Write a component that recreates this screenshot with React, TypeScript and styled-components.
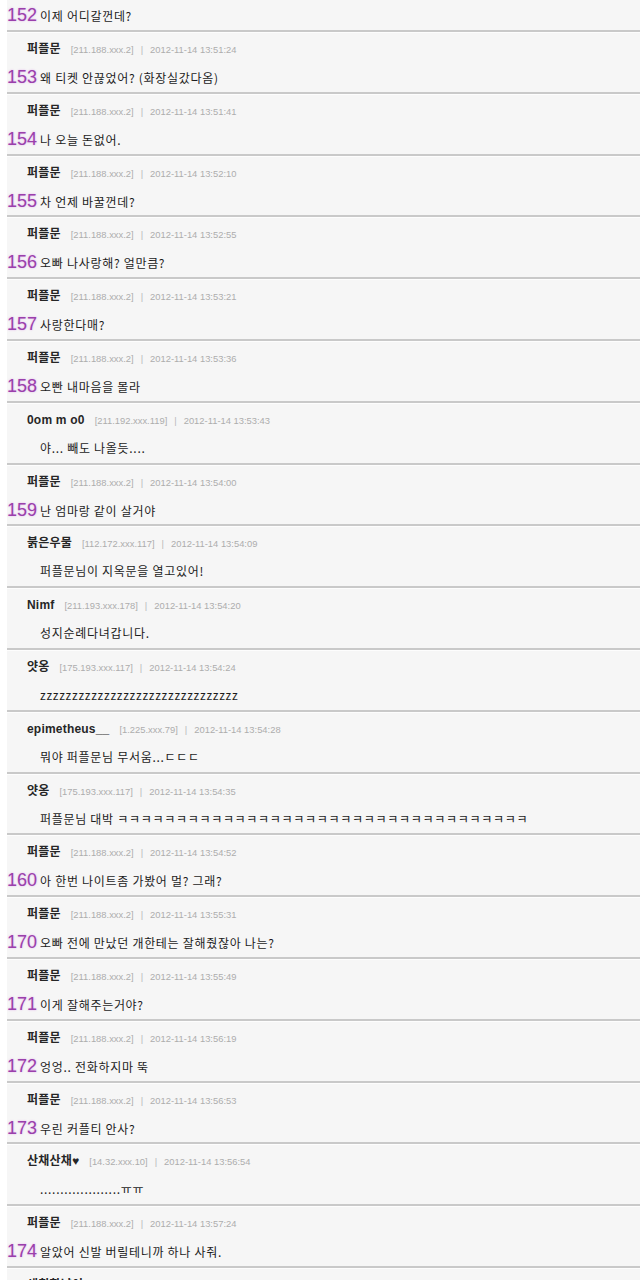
import styled, { createGlobalStyle } from "styled-components";

const GlobalStyle = createGlobalStyle`
  html, body {
    margin: 0;
    padding: 0;
    background: #ffffff;
    overflow: hidden;
  }
  body {
    font-family: "Noto Sans CJK KR", "Liberation Sans", sans-serif;
  }
`;

interface Comment {
  author: string;
  ip: string;
  time: string;
  no?: number;
  text: string;
}

const PURPLE_IP = "[211.188.xxx.2]";

const comments: Comment[] = [
  { author: "퍼플문", ip: PURPLE_IP, time: "2012-11-14 13:50:58", no: 152, text: "이제 어디갈껀데?" },
  { author: "퍼플문", ip: PURPLE_IP, time: "2012-11-14 13:51:24", no: 153, text: "왜 티켓 안끊었어? (화장실갔다옴)" },
  { author: "퍼플문", ip: PURPLE_IP, time: "2012-11-14 13:51:41", no: 154, text: "나 오늘 돈없어." },
  { author: "퍼플문", ip: PURPLE_IP, time: "2012-11-14 13:52:10", no: 155, text: "차 언제 바꿀껀데?" },
  { author: "퍼플문", ip: PURPLE_IP, time: "2012-11-14 13:52:55", no: 156, text: "오빠 나사랑해? 얼만큼?" },
  { author: "퍼플문", ip: PURPLE_IP, time: "2012-11-14 13:53:21", no: 157, text: "사랑한다매?" },
  { author: "퍼플문", ip: PURPLE_IP, time: "2012-11-14 13:53:36", no: 158, text: "오빤 내마음을 몰라" },
  { author: "0om m o0", ip: "[211.192.xxx.119]", time: "2012-11-14 13:53:43", text: "야... 빼도 나올듯...." },
  { author: "퍼플문", ip: PURPLE_IP, time: "2012-11-14 13:54:00", no: 159, text: "난 엄마랑 같이 살거야" },
  { author: "붉은우물", ip: "[112.172.xxx.117]", time: "2012-11-14 13:54:09", text: "퍼플문님이 지옥문을 열고있어!" },
  { author: "Nimf", ip: "[211.193.xxx.178]", time: "2012-11-14 13:54:20", text: "성지순례다녀갑니다." },
  { author: "얏옹", ip: "[175.193.xxx.117]", time: "2012-11-14 13:54:24", text: "z".repeat(31) },
  { author: "epimetheus__", ip: "[1.225.xxx.79]", time: "2012-11-14 13:54:28", text: "뭐야 퍼플문님 무서움...ㄷㄷㄷ" },
  { author: "얏옹", ip: "[175.193.xxx.117]", time: "2012-11-14 13:54:35", text: "퍼플문님 대박 " + "ㅋ".repeat(35) },
  { author: "퍼플문", ip: PURPLE_IP, time: "2012-11-14 13:54:52", no: 160, text: "아 한번 나이트좀 가봤어 멀? 그래?" },
  { author: "퍼플문", ip: PURPLE_IP, time: "2012-11-14 13:55:31", no: 170, text: "오빠 전에 만났던 개한테는 잘해줬잖아 나는?" },
  { author: "퍼플문", ip: PURPLE_IP, time: "2012-11-14 13:55:49", no: 171, text: "이게 잘해주는거야?" },
  { author: "퍼플문", ip: PURPLE_IP, time: "2012-11-14 13:56:19", no: 172, text: "엉엉.. 전화하지마 뚝" },
  { author: "퍼플문", ip: PURPLE_IP, time: "2012-11-14 13:56:53", no: 173, text: "우린 커플티 안사?" },
  { author: "산채산채♥", ip: "[14.32.xxx.10]", time: "2012-11-14 13:56:54", text: ".".repeat(20) + "ㅠㅠ" },
  { author: "퍼플문", ip: PURPLE_IP, time: "2012-11-14 13:57:24", no: 174, text: "알았어 신발 버릴테니까 하나 사줘." },
  { author: "새침한냥이", ip: "[121.131.xxx.52]", time: "2012-11-14 13:57:40", text: "ㅋㅋㅋㅋㅋ" },
];

const Board = styled.div`
  margin-left: 7px;
  margin-top: -31.8px;
  background: #f6f6f6;
`;

const Row = styled.div`
  box-sizing: border-box;
  height: 61.8px;
  border-top: 2px solid #c9c9c9;
  box-shadow: inset 0 1px 0 #fdfdfd;
  padding-top: 10px;
`;

const Meta = styled.div`
  display: flex;
  align-items: baseline;
  height: 14px;
  line-height: 14px;
  padding-left: 20px;
  white-space: nowrap;
`;

const Author = styled.span`
  font-family: "Liberation Sans", "Noto Sans CJK KR", sans-serif;
  font-weight: 700;
  font-size: 12px;
  color: #262626;
  letter-spacing: 0.2px;
`;

const Info = styled.span`
  font-family: "Liberation Sans", sans-serif;
  font-size: 9.4px;
  color: #adadad;
`;

const Ip = styled(Info)`
  margin-left: 10px;
`;

const Sep = styled(Info)`
  margin: 0 7px;
  color: #b8b8b8;
`;

const Body = styled.div<{ $numbered: boolean }>`
  display: flex;
  align-items: baseline;
  margin-top: 11px;
  height: 20px;
  line-height: 20px;
  padding-left: ${(p) => (p.$numbered ? 0 : 33)}px;
  white-space: nowrap;
`;

const Num = styled.span`
  font-family: "Liberation Sans", sans-serif;
  font-size: 18px;
  color: #9a40ab;
  text-shadow: 0 0 2px rgba(220, 160, 232, 0.85);
  margin-right: 3px;
`;

const Text = styled.span`
  font-family: "Noto Sans CJK KR", "Liberation Sans", sans-serif;
  font-size: 12px;
  letter-spacing: 0.7px;
  color: #1c1c1c;
`;

export default function App() {
  return (
    <>
      <GlobalStyle />
      <Board>
        {comments.map((c, i) => (
          <Row key={i}>
            <Meta>
              <Author>{c.author}</Author>
              <Ip>{c.ip}</Ip>
              <Sep>|</Sep>
              <Info>{c.time}</Info>
            </Meta>
            <Body $numbered={c.no !== undefined}>
              {c.no !== undefined && <Num>{c.no}</Num>}
              <Text>{c.text}</Text>
            </Body>
          </Row>
        ))}
      </Board>
    </>
  );
}
